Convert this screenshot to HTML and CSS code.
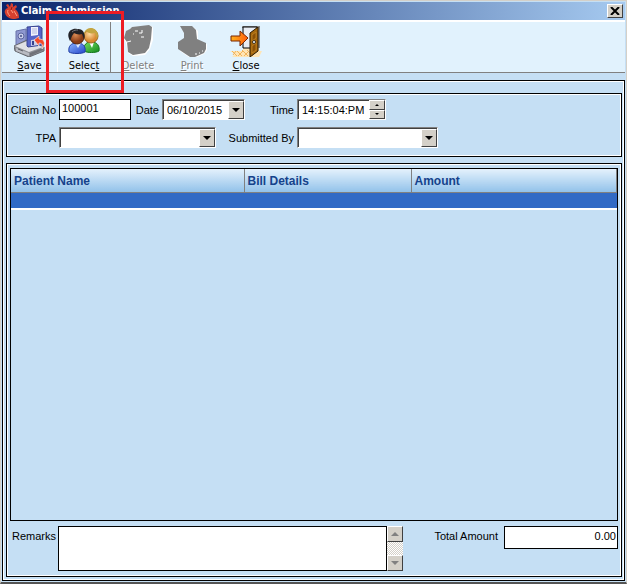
FILE: index.html
```html
<!DOCTYPE html>
<html lang="en">
<head>
  <meta charset="UTF-8" />
  <meta name="viewport" content="width=device-width, initial-scale=1.0"/>
  <title>Claim Submission</title>
  <link rel="stylesheet" href="styles.css">
</head>
<body>

  <div class="window">
    <header class="titlebar">
      <svg class="app-icon" viewBox="0 0 16 16" aria-hidden="true">
        <path d="M4 5 2 2l2-1 2 3 1-4 2 1v3l3-2 1 2-2 2c3 2 4 5 4 9l-4 1c-5 0-9-2-10-6-1-2 1-5 3-5z" fill="#d8402f"/>
        <path d="M4 7c-1 2 0 4 2 6M7 7l2 3M10 8l3 5" stroke="#ff9c80" fill="none"/>
        <path d="M8 4l-1 3" stroke="#8a1a14" fill="none"/>
      </svg>
      <h1>Claim Submission</h1>
      <button class="win-close" type="button" aria-label="Close window">
        <svg width="10" height="8" viewBox="0 0 10 8"><path d="M1 0l8 8M9 0l-8 8" stroke="#000" stroke-width="2"/></svg>
      </button>
    </header>

    <nav class="toolbar">
      <button class="tool" type="button">
        <svg viewBox="0 0 32 32" aria-hidden="true">
          <path d="M2 6l10-2v13l-10 4z" fill="#8e98d0" stroke="#6872a8"/>
          <circle cx="7" cy="11" r="3" fill="#c8cdea" stroke="#5d679f"/>
          <circle cx="7" cy="11" r="1" fill="#444e85"/>
          <path d="M0 21l13-6 17 7v4l-15 6L1 26z" fill="#8d8f96" stroke="#66686e"/>
          <path d="M1 21l12-5 16 6-14 5z" fill="#dfe0e5"/>
          <path d="M2 23l13 5v3L2 26z" fill="#b9bbc2"/>
          <path d="M16 28l13-5v2l-13 6z" fill="#707279"/>
          <path d="M4 24l5 2" stroke="#5c5e65"/>
          <path d="M13 2l12-1 3 2v17l-14 2-1-1z" fill="#5664c8" stroke="#39458f"/>
          <path d="M17 2h7v8l-7 1z" fill="#f1f2fc"/>
          <path d="M18 4h5M18 6h5M18 8h5" stroke="#b3b8dc"/>
          <path d="M17 15l7-1v6l-7 1z" fill="#c8cee9"/>
          <path d="M18 16h2v4h-2z" fill="#38438d"/>
          <path d="M20 15l5-4v3c6 0 7 5 3 10 1-4 0-6-3-6v3z" fill="#f24a2a" stroke="#fff" stroke-width=".6"/>
        </svg>
        <span><u>S</u>ave</span>
      </button>
      <button class="tool tool-select" type="button">
        <svg viewBox="0 0 32 32" aria-hidden="true">
          <defs>
            <radialGradient id="skinDark" cx=".4" cy=".35"><stop offset="0" stop-color="#d98b55"/><stop offset="1" stop-color="#8b3d16"/></radialGradient>
            <radialGradient id="skinLight" cx=".4" cy=".35"><stop offset="0" stop-color="#ffdba0"/><stop offset="1" stop-color="#d98830"/></radialGradient>
            <linearGradient id="coatBlue" y2="1"><stop stop-color="#8ab4ff"/><stop offset="1" stop-color="#2345c9"/></linearGradient>
            <linearGradient id="coatGreen" y2="1"><stop stop-color="#77df63"/><stop offset="1" stop-color="#138b1c"/></linearGradient>
          </defs>
          <path d="M16 26c-1-6 3-10 8-9 5 0 8 4 7 9-3 2-12 2-15 0z" fill="url(#coatGreen)" stroke="#13761c"/>
          <path d="M21 17h5l-2 6z" fill="#fff"/>
          <ellipse cx="23" cy="11" rx="7" ry="7" fill="url(#skinLight)" stroke="#9b631c"/>
          <path d="M16 11c-1-10 13-11 14-1l-1 4-2-6c-4 1-7 0-9-2z" fill="#c4a640"/>
          <path d="M1 27c-1-6 2-9 8-9s9 3 8 9c-3 2-13 2-16 0z" fill="url(#coatBlue)" stroke="#2340a5"/>
          <path d="M7 18h6l-3 5z" fill="#dceaff"/>
          <ellipse cx="9" cy="12" rx="7" ry="7" fill="url(#skinDark)" stroke="#54240f"/>
          <path d="M2 16C-3 7 4 3 9 4c6-1 9 5 7 10l-2-5c-3 1-6 0-8-1l-2 3z" fill="#222226"/>
          <path d="M4 7c2-2 4-2 6-2" stroke="#74747a" fill="none"/>
        </svg>
        <span>Selec<u>t</u></span>
      </button>
      <button class="tool" type="button" disabled>
        <svg viewBox="0 0 32 32" aria-hidden="true">
          <path d="M10 2l20-1 1 2v12l-3 9-5 6-12 1-5-3-2-10-2-4 2-6z" fill="#fff"/>
          <path d="M10 2l17-2 3 2-1 12-2 9-4 5-12 2-5-3-1-10-3-4 2-7 4-2z" fill="#808080"/>
          <path d="M13 6h3M17 8h3M5 17l4-1M19 12h3M20 5v3M11 9h1" stroke="#fff"/>
        </svg>
        <span><u>D</u>elete</span>
      </button>
      <button class="tool" type="button" disabled>
        <svg viewBox="0 0 32 32" aria-hidden="true">
          <path d="M5 2h12l5 4v10l9 3v6l-3 4-9 4h-5L4 26v-9l4-3V8z" fill="#fff"/>
          <path d="M4 1h12l4 4 1 9 9 4v6l-2 4-9 4h-5L2 24v-7l6-4V8z" fill="#808080"/>
          <path d="M19 29h2M23 28h1M26 26h1" stroke="#fff"/>
        </svg>
        <span><u>P</u>rint</span>
      </button>
      <button class="tool" type="button">
        <svg viewBox="0 0 32 32" aria-hidden="true">
          <defs><linearGradient id="arrowFill"><stop stop-color="#ffb21c"/><stop offset="1" stop-color="#ff5a0a"/></linearGradient></defs>
          <path d="M0 26h13v-3h16v3h3l-3 6H2l3-3z" fill="#ffe5b5"/>
          <path d="M2 26l5 5M7 26l5 5M12 25l6 6M17 25l6 6M6 26l-3 4M13 26l-5 5M19 26l-5 5" stroke="#f2b45c"/>
          <path d="M12 1h18v22h-2V3H12z" fill="#8d8d8d"/>
          <path d="M13 2h14v21H13z" fill="#e9ecf2" stroke="#000"/>
          <path d="M20 8l8-6v24l-8 6z" fill="#a7680c" stroke="#2a1800"/>
          <path d="M22 10l4-3v6l-4 3zM22 21l4-3v7l-4 3z" fill="#8a5006" stroke="#c5892c" stroke-width=".7"/>
          <circle cx="24" cy="17" r="1.5" fill="#fff" stroke="#000" stroke-width=".7"/>
          <path d="M1 11h9V6l8 7-8 8v-5H1z" fill="url(#arrowFill)" stroke="#7b2500"/>
        </svg>
        <span><u>C</u>lose</span>
      </button>
    </nav>

    <main class="content frame">
      <form class="claim-form frame">
        <label for="claimNo">Claim No</label>
        <input id="claimNo" class="flat-input" type="text" value="100001">

        <label for="claimDate">Date</label>
        <div class="combo">
          <input id="claimDate" type="text" value="06/10/2015">
          <button class="drop" type="button" aria-label="Pick date"></button>
        </div>

        <label for="claimTime">Time</label>
        <div class="combo time">
          <input id="claimTime" type="text" value="14:15:04:PM">
          <div class="spin">
            <button class="up" type="button" aria-label="Later"></button>
            <button type="button" aria-label="Earlier"></button>
          </div>
        </div>

        <label for="tpa">TPA</label>
        <div class="combo tpa">
          <select id="tpa"><option></option></select>
          <span class="drop"></span>
        </div>

        <label for="submittedBy">Submitted By</label>
        <div class="combo">
          <select id="submittedBy"><option></option></select>
          <span class="drop"></span>
        </div>
      </form>

      <section class="details frame">
        <div class="grid">
          <table>
            <thead>
              <tr>
                <th class="col-name">Patient Name</th>
                <th class="col-bill">Bill Details</th>
                <th>Amount</th>
              </tr>
            </thead>
            <tbody>
              <tr class="selected"><td></td><td></td><td></td></tr>
            </tbody>
          </table>
        </div>

        <div class="summary">
          <label for="remarks">Remarks</label>
          <div class="remarks">
            <textarea id="remarks"></textarea>
            <div class="scrollbar">
              <button class="up" type="button" aria-label="Scroll up"></button>
              <button type="button" aria-label="Scroll down"></button>
            </div>
          </div>
          <label class="total-label" for="total">Total Amount</label>
          <input id="total" class="flat-input total" type="text" value="0.00">
        </div>
      </section>
    </main>

    <!-- highlight around the Select button -->
    <div class="highlight"></div>
  </div>

</body>
</html>
```

FILE: styles.css
```css
* {
  box-sizing: border-box;
}

body {
  margin: 0;
  background: #d4d0c8;
  color: #000;
  font-family: "Liberation Sans", Arial, sans-serif;
  font-size: 11px;
}

button,
input,
select,
textarea {
  margin: 0;
  padding: 0;
  border: 0;
  border-radius: 0;
  color: inherit;
  font: inherit;
}

.window {
  position: relative;
  display: flex;
  flex-direction: column;
  min-height: 100vh;
  padding: 1px 1px 0;
  border: 1px solid #d4d0c8;
  border-bottom: 2px solid #555;
  background: #c5dff4;
}

/* title bar */
.titlebar {
  display: flex;
  align-items: center;
  height: 18px;
  padding: 0 2px;
  background: linear-gradient(to right, #0a246a, #a6caf0);
  color: #fff;
}

.app-icon {
  width: 16px;
  height: 16px;
}

h1 {
  flex: 1;
  margin: 0 0 0 1px;
  font-family: "DejaVu Sans Condensed", "DejaVu Sans", sans-serif;
  font-size: 11px;
  line-height: 18px;
}

.win-close {
  display: flex;
  align-items: center;
  justify-content: center;
  width: 16px;
  height: 14px;
  background: #d4d0c8;
  border: 1px solid;
  border-color: #fff #404040 #404040 #fff;
}

/* toolbar */
.toolbar {
  display: flex;
  height: 53px;
  border-top: 2px solid #fff;
  border-bottom: 1px solid #808080;
  background: #e1f2fd;
}

.tool {
  display: flex;
  flex-direction: column;
  align-items: center;
  justify-content: flex-start;
  gap: 1px;
  width: 54px;
  padding-top: 3px;
  background: none;
  font-family: "DejaVu Sans Condensed", "DejaVu Sans", sans-serif;
  font-size: 11px;
  line-height: 16px;
}

.tool:first-child {
  width: 55px;
}

.tool svg {
  flex: none;
  width: 32px;
  height: 32px;
}

.tool:disabled {
  color: #808080;
  text-shadow: 1px 1px #fff;
}

.tool u {
  text-underline-offset: 1px;
}

.tool-select {
  border-left: 1px solid #fff;
  border-right: 1px solid #808080;
}

/* framed panels */
.frame {
  border: 1px solid #000;
  box-shadow: inset 0 0 0 1px #fff;
}

.content {
  flex: 1;
  display: flex;
  flex-direction: column;
  gap: 6px;
  margin: 7px 0 1px;
  padding: 12px 2px 3px 3px;
}

.claim-form {
  display: grid;
  grid-template-columns: 49px 72px 25px 83px 46px 141px;
  grid-auto-rows: 21px;
  gap: 7px 3px;
  align-items: center;
  padding: 5px 0 8px;
}

.claim-form label {
  justify-self: end;
  white-space: nowrap;
}

.flat-input {
  width: 100%;
  height: 21px;
  padding: 0 2px 4px;
  border: 1px solid #000;
  background: #fff;
}

.combo {
  position: relative;
  display: flex;
  height: 21px;
  border: 1px solid;
  border-color: #808080 #fff #fff #808080;
  box-shadow: inset 1px 1px #404040;
  background: #fff;
}

.combo input {
  flex: 1;
  min-width: 0;
  margin: 1px 0 0 1px;
  padding-left: 3px;
  background: #fff;
}

.combo select {
  flex: 1;
  appearance: none;
  margin: 1px 0 0 1px;
  padding-left: 3px;
  background: #fff;
}

.time {
  width: 89px;
}

.tpa {
  grid-column: span 3;
  width: 157px;
}

.drop,
.spin button,
.scrollbar button {
  display: flex;
  align-items: center;
  justify-content: center;
  background: #d4d0c8;
  border: 1px solid;
  border-color: #fff #404040 #404040 #fff;
}

.drop {
  width: 16px;
  margin-top: 1px;
}

span.drop {
  position: absolute;
  top: 0;
  right: 0;
  bottom: 0;
  pointer-events: none;
}

.drop::after {
  content: "";
  border: 4px solid transparent;
  border-top-color: #000;
  border-bottom: 0;
}

.spin {
  display: flex;
  flex-direction: column;
  width: 16px;
}

.spin button {
  flex: 1;
}

.spin button::after {
  content: "";
  border: 2px solid transparent;
  border-top-color: #000;
  border-bottom: 0;
}

.spin .up::after,
.scrollbar .up::after {
  transform: rotate(180deg);
}

/* details */
.details {
  flex: 1;
  display: flex;
  flex-direction: column;
  gap: 5px;
  padding: 4px 3px 5px;
}

.grid {
  flex: 1;
  border: 1px solid #000;
}

table {
  width: 100%;
  border-collapse: collapse;
  table-layout: fixed;
}

th {
  height: 23px;
  padding: 1px 3px 0;
  border-right: 1px solid #808080;
  border-bottom: 1px solid #808080;
  background: linear-gradient(#e4f1fc, #92c2ea);
  color: #15428b;
  font-size: 12px;
  text-align: left;
}

.col-name {
  width: 233px;
}

.col-bill {
  width: 167px;
}

td {
  height: 17px;
  padding: 0;
  border-bottom: 2px solid #fff;
}

.selected {
  background: #316ac5;
}

.summary {
  display: flex;
  align-items: flex-start;
  line-height: 20px;
}

.summary label {
  width: 48px;
  padding-left: 2px;
  white-space: nowrap;
}

.remarks {
  flex: 1;
  display: flex;
  height: 45px;
}

textarea {
  flex: 1;
  min-width: 0;
  border: 1px solid #000;
  background: #fff;
  resize: none;
}

.scrollbar {
  display: flex;
  flex-direction: column;
  justify-content: space-between;
  width: 16px;
  background: repeating-conic-gradient(#fff 0 25%, #d4d0c8 0 50%) 0 0 / 2px 2px;
}

.scrollbar button {
  height: 16px;
}

.scrollbar button::after {
  content: "";
  border: 4px solid transparent;
  border-top-color: #808080;
  border-bottom: 0;
}

.summary .total-label {
  width: auto;
  margin-left: 31px;
  padding: 0 6px 0 0;
}

.total {
  width: 114px;
  height: 23px;
  padding: 0 1px 4px;
  text-align: right;
}

.highlight {
  position: absolute;
  top: 10px;
  left: 45px;
  width: 78px;
  height: 82px;
  border: 3px solid #ed1c24;
  pointer-events: none;
}
```
